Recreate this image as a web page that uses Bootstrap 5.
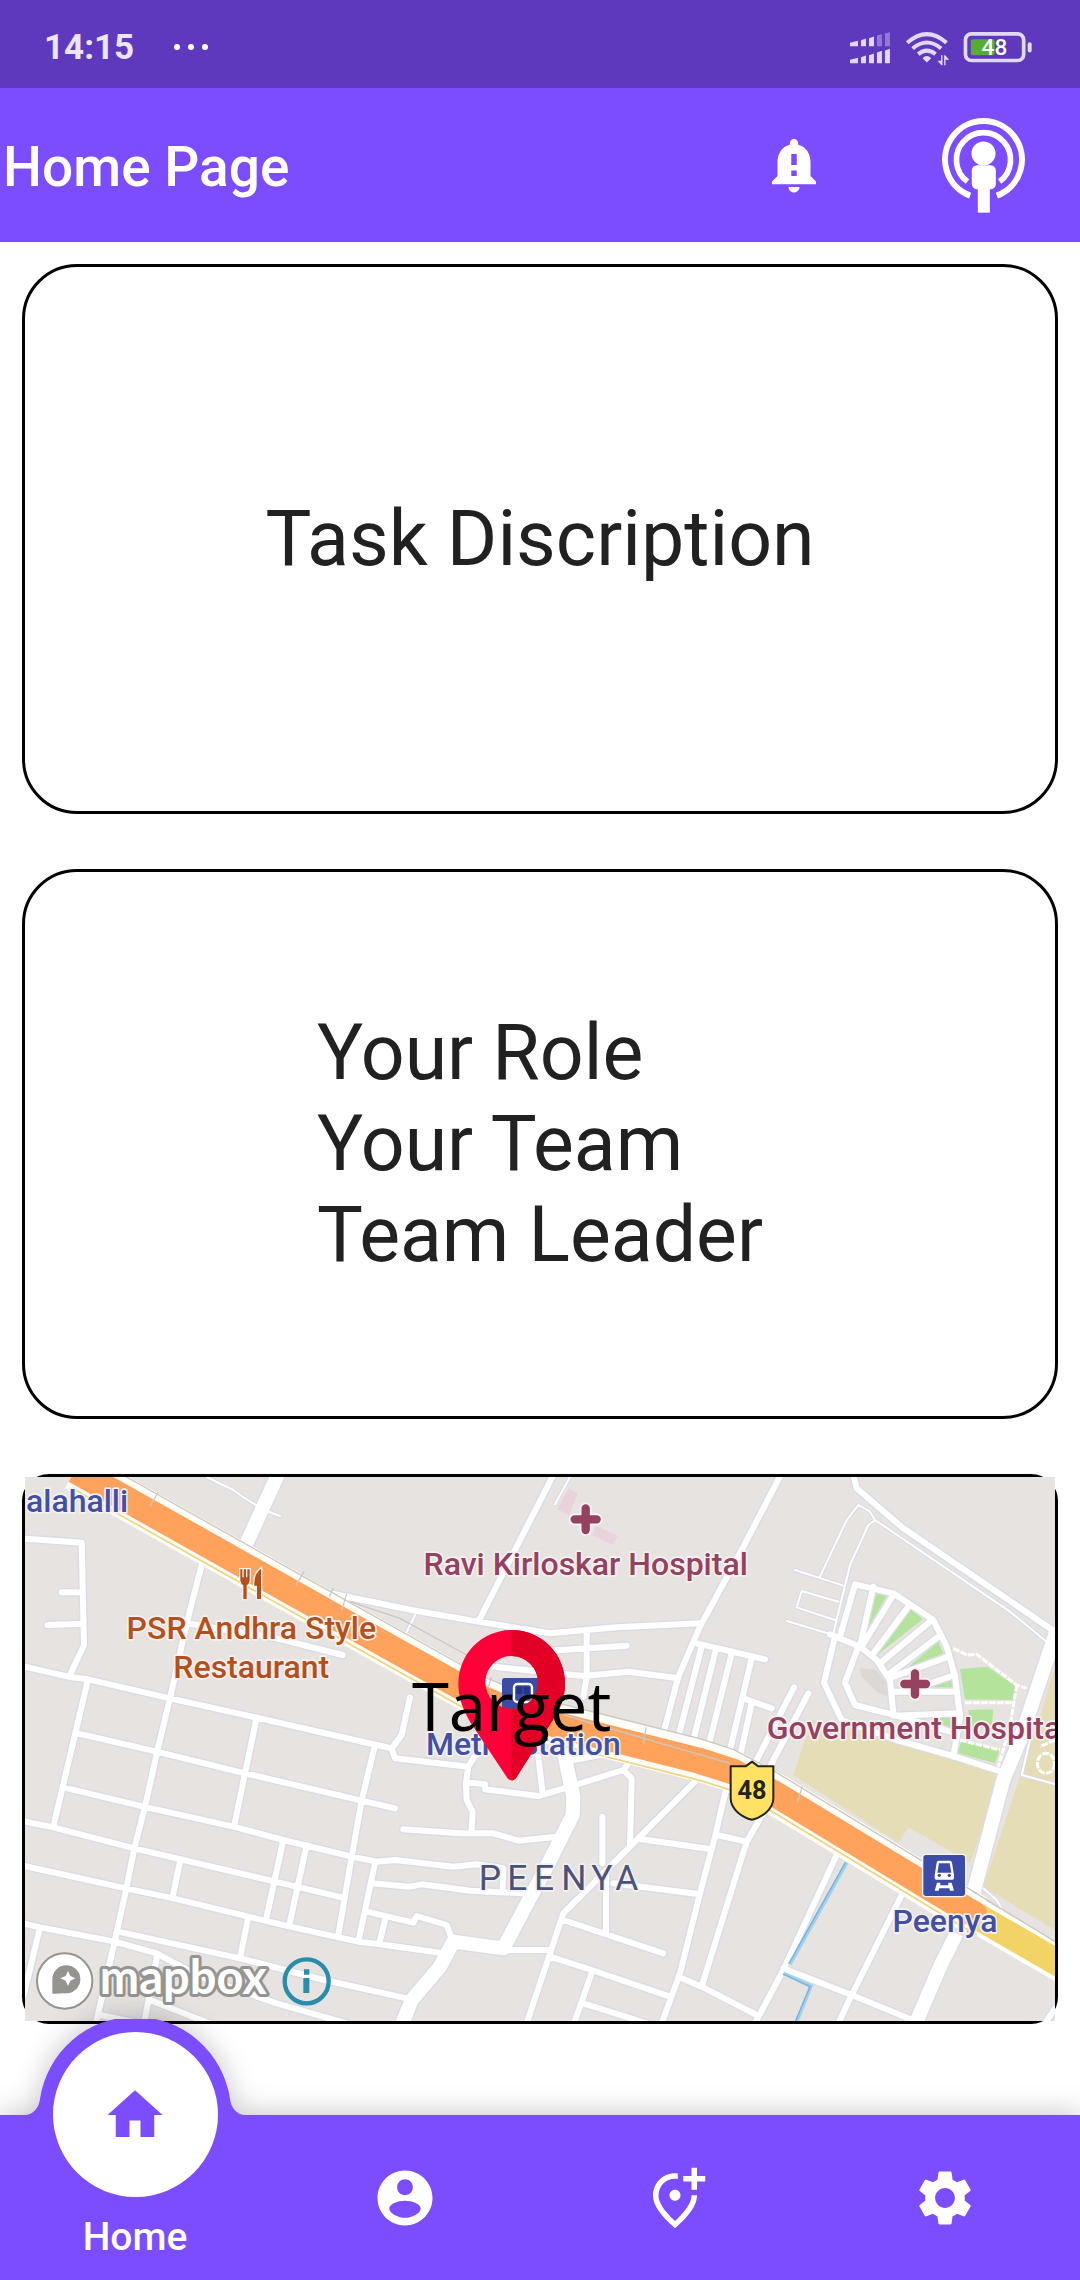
<!DOCTYPE html>
<html lang="en">
<head>
<meta charset="utf-8">
<meta name="viewport" content="width=device-width, initial-scale=1">
<title>Home Page</title>
<link href="https://cdn.jsdelivr.net/npm/bootstrap@5.3.0/dist/css/bootstrap.min.css" rel="stylesheet">
<style>
:root{--brand:#7c4dff;--brand-dark:#5e39bd}
body{font-family:Roboto,"Liberation Sans",sans-serif;color:#212121}
svg{display:block}
.status-bar{background:var(--brand-dark);height:88px;padding:8px 47px 0 44px;font-size:35px;font-weight:700;color:#ebe5fb}
.status-dots{margin-left:39px}
.app-bar{background:var(--brand);height:154px;padding:0 55px 0 3px}
.app-title{font-size:55px;font-weight:500;line-height:64px;padding-top:4px}
.app-actions{gap:115px}
.content{padding:22px 22px 90px;gap:55px}
.panel{height:550px;border:3px solid #000;border-radius:55px;font-size:77px;line-height:91px}
.panel-map{border-radius:27px}
.map-canvas{background:#e6e3e0}
.bottom-bar{background:var(--brand);height:165px;filter:drop-shadow(0 -2px 14px rgba(0,0,0,.22))}
.tab-home .bump{position:absolute;left:50%;bottom:100%;margin-left:-120px}
.home-disc{width:165px;height:165px;margin-top:-83px}
.home-label{font-size:39px;font-weight:500;line-height:44px;margin-top:18px}
.lbl{font-family:Roboto,sans-serif;font-size:96px;font-weight:500;stroke:#f3f1f1;stroke-width:10px;paint-order:stroke;stroke-linejoin:round}
</style>
<script src="https://cdn.jsdelivr.net/npm/bootstrap@5.3.0/dist/js/bootstrap.bundle.min.js"></script>
</head>
<body class="d-flex flex-column min-vh-100 bg-white">

<div class="status-bar d-flex align-items-center">
  <span>14:15</span>
  <svg class="status-dots" width="36" height="8" viewBox="0 0 36 8" fill="#fff" aria-hidden="true"><circle cx="4" cy="3" r="3"/><circle cx="18" cy="3" r="3"/><circle cx="32" cy="3" r="3"/></svg>
  <svg class="ms-auto" width="183" height="37" viewBox="450 90 550 110" fill="#e1d9f8" role="img" aria-label="Signal, Wi-Fi, battery 48 percent">
    <path d="M450 128l24-6v16h-24zM483 120l15-5v23h-15zM507 114l15-5v29h-15zM450 179l24-6v16h-24zM483 171l15-5v23h-15zM507 165l15-5v29h-15zM531 157l15-5v37h-15zM555 151l15-5v43h-15z"/>
    <path d="M531 106l15-4v36h-15zM555 100l15-4v42h-15z" opacity=".4"/>
    <g fill="none" stroke="#e1d9f8" stroke-width="12"><path d="M622 128Q681 76 740 128"/><path d="M638 145Q681 109 724 145"/><path d="M655 162Q681 141 707 162"/></g>
    <path d="M668 174Q681 161 694 174L681 187zM724 165h4v30h-3l-12-13h11zM733 165h3l12 14h-11v16h-4z"/>
    <rect x="797" y="101" width="175" height="80" rx="18" fill="none" stroke="#e1d9f8" stroke-width="11"/>
    <rect x="813" y="117" width="72" height="48" rx="6" fill="#56ad31"/>
    <rect x="984" y="126" width="12" height="31" rx="6"/>
    <text x="884" y="166" text-anchor="middle" font-family="Roboto" font-weight="500" font-size="68" fill="#fff">48</text>
  </svg>
</div>

<header class="app-bar d-flex align-items-center justify-content-between text-white">
  <h1 class="app-title m-0">Home Page</h1>
  <div class="app-actions d-flex align-items-center">
    <button class="btn p-0 border-0" type="button" aria-label="Notifications">
      <svg width="66" height="66" viewBox="0 0 24 24" fill="#fff"><path d="M18 16v-5c0-3.07-1.64-5.64-4.5-6.32V4c0-.83-.67-1.5-1.5-1.5s-1.5.67-1.5 1.5v.68C7.63 5.36 6 7.92 6 11v5l-2 2v1h16v-1l-2-2zm-5 0h-2v-2h2v2zm0-4h-2V8h2v4zm-1 10c1.1 0 2-.9 2-2h-4c0 1.1.89 2 2 2z"/></svg>
    </button>
    <button class="btn p-0 border-0" type="button" aria-label="Broadcast">
      <svg width="83" height="95" viewBox="727 353 248 284" fill="#fff">
        <g fill="none" stroke="#fff"><path d="M811 585A115 115 0 1 1 891 585" stroke-width="18"/><path d="M803 543A81 81 0 1 1 899 543" stroke-width="17"/></g>
        <circle cx="851" cy="459" r="36"/><rect x="816" y="494" width="72" height="72" rx="16"/><path d="M834 560h36v76h-36z"/>
      </svg>
    </button>
  </div>
</header>

<main class="content d-flex flex-column flex-grow-1">
  <section class="panel d-flex align-items-center justify-content-center">Task Discription</section>
  <section class="panel d-flex align-items-center justify-content-center"><div>Your Role<br>Your Team<br>Team Leader</div></section>
  <section class="panel panel-map" aria-label="Map">
    <svg class="map-canvas w-100 h-100" viewBox="75 81 3090 1632" preserveAspectRatio="xMidYMid slice">
      <defs>
        <g id="lanes" fill="none" stroke-linecap="round" stroke-linejoin="round">
          <path d="M2460 380L2540 210L2575 165L2610 185L2625 210L2605 225L2550 345L2500 550M2625 210L3030 485L3140 575M2385 360L2530 407M2515 455L2405 423L2390 472L2505 510M2360 513L2490 552M620 81L700 120Q780 180 840 198M1710 81L1665 163M1245 495L1218 550M3090 870L3065 975L3165 1002M2950 1315L2990 1350L3010 1385"/>
        </g>
        <g id="streets" fill="none" stroke-linecap="round" stroke-linejoin="round">
          <path d="M60 265L245 278L252 585L213 668M185 427H248M142 525L250 521M60 647L215 682L264 688L510 745L770 803L1130 885L1175 895M264 688L160 1130M605 345L560 520L510 745L475 890L435 1070L403 1195L378 1320L345 1470L288 1720M560 520L830 565L1028 615M770 803L735 970L703 1125M232 850L470 905L735 970L1085 1052L1185 1075M190 1012L430 1070L700 1130L850 1170L1055 1220L1130 1235L1185 1230L1360 1250L1430 1243L1510 1255L1508 1325M60 1112L160 1132L403 1195L825 1295L890 1310L1025 1342M60 1245L378 1315L520 1345L745 1400L870 1430L1075 1475L1135 1482L1330 1510M60 1418L120 1432L345 1475L470 1510L600 1580L830 1660L1040 1720M355 1445L720 1525L960 1587L1220 1645M120 1432L70 1640M850 1170L800 1400M920 1185L868 1425M1125 885L1085 1052L1055 1220L1015 1455M1125 1240L1075 1475M540 1235L518 1340M745 1400L720 1525M1115 1300L1230 1310L1265 1303L1410 1322L1570 1330M1100 1385L1240 1418L1250 1398L1340 1425L1355 1465M1155 1410L1138 1480M470 1525L432 1720M300 1695L430 1722M450 1650L640 1725M1230 742L1205 855L1175 895L1185 925L1405 950L1430 910M1405 950L1398 1000L1400 1050L1418 1085L1415 1140M1400 997L1455 1003V1018L1615 1038L1710 1010L1870 960L1885 940M1870 960L1895 985L1890 1185M1615 920L1628 1030M1720 930L1880 900M1210 1138L1380 1150H1480L1555 1172L1670 1160M1000 432L1250 483L1435 515L1650 550L1850 532L2100 520M1660 75L1435 515M2342 75L2225 300L2100 530L2035 680L1990 850M1650 602L1880 587M1760 550V680L1750 740M1480 650L1750 678L1885 665L2035 685M2090 580L2295 628M2105 590L2035 860M2147 600L2080 870M2195 610L2125 890M2255 625L2190 900M2255 760L2220 920M2230 745L2315 775M2382 712L2270 930M2425 730L2310 950M1520 1500H1650M2090 990L1920 1160L1690 1390L1650 1510L1580 1720M1807 1100V1240M1818 1270V1450M1920 1167L2135 1198M1840 1300L2100 1333M1690 1410L1990 1510M1650 1520L1775 1560L2010 1640M1775 1570L1722 1720M1750 1660L1940 1720M2180 1010L2145 1160L2100 1330L2040 1570L1985 1720M2150 1155L2240 1175M2290 1090L2240 1175L2105 1610M2035 1580L2105 1610L2270 1695M2510 1215L2350 1560L2265 1720M2350 1555L2555 1635L2750 1715M2705 1335L2555 1635L2515 1720M3165 1675L3135 1720"/>
          <path d="M2490 553L2580 590L2630 630L2670 690L2680 790M2520 560L2565 403L2680 430L2800 510L2840 590L2865 680L2880 800L2860 920M2505 560L2472 698L2525 810L2690 870L2865 920L3010 967M2575 590L2535 698L2565 765L2690 797L2850 845M2680 797L2880 790M2620 410L2580 590M2680 435L2585 590M2725 470L2620 610M2790 515L2640 640M2815 560L2670 670M2845 620L2680 680M2865 675L2790 700M2680 725H2870M2560 75L2570 115L2710 235L3165 545"/>
        </g>
        <g id="avenues" fill="none" stroke-linejoin="round">
          <path d="M1690 900L1720 1040L1718 1095L1640 1250L1510 1495L1360 1475L1320 1550L1235 1650L1205 1725M2870 1450L2820 1550L2745 1725M3172 535L3060 870L3010 990L2920 1330M840 60L735 290"/>
        </g>
        <path id="highway" fill="none" d="M225 61L1050 525L1390 715Q1490 775 1690 830L2100 933L2200 965L2325 1032L2800 1320L2930 1397"/>
      </defs>

      <g fill="#e4ddb6"><path d="M2435 810L2380 975L2695 1178L2725 1132L2845 1200L2910 1240L3005 970L2690 880Z"/><path d="M3165 650L3120 800L3050 1010L2950 1310L3165 1440Z"/></g>
      <path fill="#dcd9d5" d="M2580 655L2630 660L2660 700L2665 740L2630 725L2585 680Z"/>
      <g fill="#ead2dc"><path d="M1705 115L1733 130L1708 195L1672 178Z"/><path d="M1790 228L1853 258L1838 284L1775 255Z"/></g>
      <g fill="#b4e39c"><path d="M2630 430L2660 437L2600 540ZM2730 475L2768 508L2625 620ZM2815 575L2830 610L2720 655ZM2855 683L2857 712H2795ZM2880 657L2962 650L3050 710L3038 750L2895 748ZM2905 780L2980 778L2975 830L2910 835ZM2800 805H2865V835L2820 822ZM2885 872L3000 900L2985 940L2873 908Z"/></g>

      <use href="#lanes" stroke="#d9dae6" stroke-width="12"/>
      <use href="#streets" stroke="#dadbe6" stroke-width="26"/>
      <use href="#avenues" stroke="#dadbe6" stroke-width="50"/>
      <use href="#lanes" stroke="#fff" stroke-width="6"/>
      <use href="#streets" stroke="#fff" stroke-width="18"/>
      <use href="#avenues" stroke="#fff" stroke-width="42"/>
      <g fill="none" stroke="#fff" stroke-width="9" stroke-dasharray="20 4"><path d="M2860 595L2900 615L2930 613L3050 705L3080 715M3050 705L3030 830L2995 950M2895 758H3040M2880 870L3000 900M3165 870L3120 890"/><ellipse cx="3138" cy="940" rx="26" ry="30"/></g>
      <g fill="none"><path d="M2540 1238L2370 1542M2350 1570L2433 1608L2390 1715" stroke="#9bd3ee" stroke-width="11"/><path d="M2536 1238L2366 1542M2350 1572L2430 1610L2386 1715" stroke="#7faedb" stroke-width="4"/></g>

      <path d="M2920 1392L3190 1548" stroke="#fff" stroke-width="104"/>
      <path d="M2920 1392L3190 1548" stroke="#f2d365" stroke-width="80"/>
      <use href="#highway" stroke="#fffef8" stroke-width="124"/>
      <use href="#highway" stroke="#ffa25c" stroke-width="78"/>
      <path d="M2925 1350Q2975 1375 2955 1395L2900 1450Z" fill="#ffa25c"/>
      <use href="#highway" y="58" stroke="#efd47d" stroke-width="5"/>
      <use href="#highway" y="-67" stroke="#c9c8c1" stroke-width="4"/>
      <g fill="none" stroke="#c9c8c1" stroke-width="4"><path d="M2920 1325L3170 1478M1050 455L1200 505L1400 615M1690 795L2190 940M475 126L450 168M912 364L888 406M1000 414L988 440M1040 432L1025 480M1938 832L1930 885M2407 1010L2392 1056M1475 680L1462 720"/></g>

      <g fill="#b5501a" stroke="#f6f1ee" stroke-width="8" paint-order="stroke"><path d="M721 358h6v24h4v-24h7v24h4v-24h7v34q-2 10-9 14v41h-10v-41q-7-4-9-14zM783 356v91h-12v-40h-8q-2-36 20-51z"/></g>
      <g fill="none" stroke-linecap="round"><g stroke="#f6f1f3" stroke-width="36"><path d="M1757 175V240M1724 208H1790M2745 670V734M2713 702H2778"/></g><g stroke="#96415f" stroke-width="25"><path d="M1757 175V240M1724 208H1790M2745 670V734M2713 702H2778"/></g></g>
      <g fill="#3b4ba6"><rect x="1506" y="684" width="116" height="116" rx="8"/><rect x="2770" y="1215" width="125" height="123" rx="8" stroke="#f5f4f6" stroke-width="8" paint-order="stroke"/></g>
      <g fill="none" stroke="#fff" stroke-width="7"><rect x="1542" y="702" width="54" height="54" rx="10"/></g>
      <path d="M1549 710h18v22h-18zM1571 710h18v22h-18z" fill="#26348c"/>
      <path fill="#fff" fill-rule="evenodd" d="M2815 1232h35q5 0 6 6l6 38v9q0 4-5 4h-48q-5 0-5-4v-9l6-38q1-6 5-6zm2 8l-5 28h42l-5-28zM2811 1298h10v8h24v-8h10l7 24h-12l-2-7h-30l-2 7h-12z"/>
      <g fill="#3b4ba6"><circle cx="2818" cy="1276" r="5"/><circle cx="2848" cy="1276" r="5"/></g>

      <g class="map-labels">
        <text class="lbl" x="78" y="186" fill="#424fa5">alahalli</text>
        <g fill="#b5501a" text-anchor="middle"><text class="lbl" x="754" y="568">PSR Andhra Style</text><text class="lbl" x="754" y="685">Restaurant</text></g>
        <g fill="#96415f"><text class="lbl" x="1757" y="374" text-anchor="middle">Ravi Kirloskar Hospital</text><text class="lbl" x="2300" y="866">Government Hospital</text></g>
        <g fill="#424fa5" text-anchor="middle"><text class="lbl" x="1570" y="914">Metro Station</text><text class="lbl" x="2835" y="1446">Peenya</text></g>
        <text class="lbl" y="1321" x="1436 1522 1602 1684 1774 1846" fill="#4b5179" style="font-weight:400;font-size:106px">PEENYA</text>
      </g>

      <path d="M2256 935L2275 949H2320V1045C2320 1080 2282 1104 2256 1109C2230 1104 2192 1080 2192 1045V949H2237Z" fill="#ffe264" stroke="#24231c" stroke-width="6" stroke-linejoin="round"/>
      <text x="2256" y="1046" text-anchor="middle" font-family="Roboto" font-weight="700" font-size="76" fill="#24231c">48</text>

      <path d="M1535 540A160 160 0 0 0 1375 700C1375 745 1390 780 1410 815L1522 984Q1535 998 1548 984L1655 815C1680 780 1695 745 1695 700A160 160 0 0 0 1535 540ZM1535 618A79 79 0 1 1 1535 776A79 79 0 1 1 1535 618Z" fill="#ff0039"/>
      <path d="M1535 540A160 160 0 0 1 1695 700C1695 745 1680 780 1655 815L1548 984Q1542 992 1535 992V776A79 79 0 0 0 1535 618Z" fill="#e30027"/>
      <text x="1535" y="842" text-anchor="middle" font-family="Open Sans, Noto Sans" font-size="201" fill="#000">Target</text>

      <g><circle cx="194" cy="1593" r="83" fill="#fff" stroke="#969490" stroke-width="6"/><path d="M157 1631V1588A42 42 0 1 1 200 1630Z" fill="#969490"/><path d="M204 1563l7 15 15 7-15 7-7 16-7-16-16-7 16-7z" fill="#fff"/>
      <text x="550" y="1632" text-anchor="middle" font-family="Lato" font-weight="700" font-size="141" fill="#fff" stroke="#969490" stroke-width="18" stroke-linejoin="round" paint-order="stroke">mapbox</text></g>
      <g><circle cx="920" cy="1594" r="66" fill="none" stroke="#268dac" stroke-width="13"/><path d="M912 1558h16v16h-16zM910 1584h18v45h-18z" fill="#268dac"/></g>
    </svg>
  </section>
</main>

<nav class="bottom-bar row g-0" aria-label="Main">
  <a class="tab-home col position-relative d-flex flex-column align-items-center text-white text-decoration-none" href="#home" aria-current="page">
    <svg class="bump" width="240" height="96" viewBox="0 0 240 96" fill="#7c4dff" aria-hidden="true"><path d="M9 96C19 96 24 88 25 80A96 96 0 0 1 215 80C216 88 221 96 231 96Z"/></svg>
    <span class="home-disc position-relative rounded-circle bg-white d-flex align-items-center justify-content-center">
      <svg width="66" height="66" viewBox="0 0 24 24" fill="#7c4dff" aria-hidden="true"><path d="M10 20v-6h4v6h5v-8h3L12 3 2 12h3v8z"/></svg>
    </span>
    <span class="home-label">Home</span>
  </a>
  <a class="col d-flex align-items-center justify-content-center" href="#profile" aria-label="Profile">
    <svg width="66" height="66" viewBox="0 0 24 24" fill="#fff"><path d="M12 2C6.48 2 2 6.48 2 12s4.48 10 10 10 10-4.480 10-10S17.520 2 12 2zm0 3.200c1.580 0 2.860 1.280 2.860 2.900S13.580 11 12 11s-2.860-1.280-2.860-2.900S10.420 5.200 12 5.200zM12 19.200c-2.700 0-5.700-1.700-5.700-3.400 0-1.600 3-2.800 5.700-2.800s5.700 1.200 5.700 2.800c0 1.700-3 3.400-5.700 3.400z"/></svg>
  </a>
  <a class="col d-flex align-items-center justify-content-center" href="#add-place" aria-label="Add place">
    <svg width="66" height="66" viewBox="0 0 24 24" fill="#fff"><path d="M20 1v3h3v2h-3v3h-2V6h-3V4h3V1h2zM12 13c1.100 0 2-.9 2-2s-.9-2-2-2-2 .9-2 2 .9 2 2 2zm1-9.920V5.100C12.700 5.030 12.300 5 12 5c-3.350 0-6 2.570-6 6.200 0 2.340 1.950 5.440 6 9.140 4.050-3.700 6-6.790 6-9.140V11h2v.2c0 3.320-2.670 7.250-8 11.800-5.330-4.550-8-8.480-8-11.800C4 6.220 7.800 3 12 3c.34 0 .67.020 1 .08z"/></svg>
  </a>
  <a class="col d-flex align-items-center justify-content-center" href="#settings" aria-label="Settings">
    <svg width="66" height="66" viewBox="0 0 24 24" fill="#fff"><path d="M19.140 12.940c.04-.3.060-.61.060-.94 0-.32-.020-.64-.070-.94l2.030-1.580c.18-.14.23-.41.120-.61l-1.920-3.320c-.12-.22-.37-.29-.59-.22l-2.390.96c-.5-.38-1.030-.7-1.620-.94l-.36-2.540c-.04-.24-.24-.41-.48-.41h-3.840c-.24 0-.43.17-.47.41l-.36 2.540c-.59.24-1.130.57-1.620.94l-2.390-.96c-.22-.08-.47 0-.59.22L2.740 8.870c-.12.21-.08.47.12.61l2.030 1.580c-.05.3-.09.63-.09.94s.020.64.070.94l-2.030 1.580c-.18.14-.23.41-.12.61l1.920 3.320c.12.22.37.29.59.22l2.390-.96c.5.38 1.030.7 1.620.94l.36 2.540c.05.24.24.41.48.41h3.840c.24 0 .44-.17.47-.41l.36-2.540c.59-.24 1.130-.56 1.620-.94l2.390.96c.22.08.47 0 .59-.22l1.920-3.320c.12-.22.070-.47-.12-.61l-2.010-1.580zM12 15.600c-1.980 0-3.600-1.620-3.600-3.600s1.620-3.600 3.600-3.600 3.600 1.620 3.600 3.600-1.620 3.600-3.600 3.600z"/></svg>
  </a>
</nav>
</body>
</html>
